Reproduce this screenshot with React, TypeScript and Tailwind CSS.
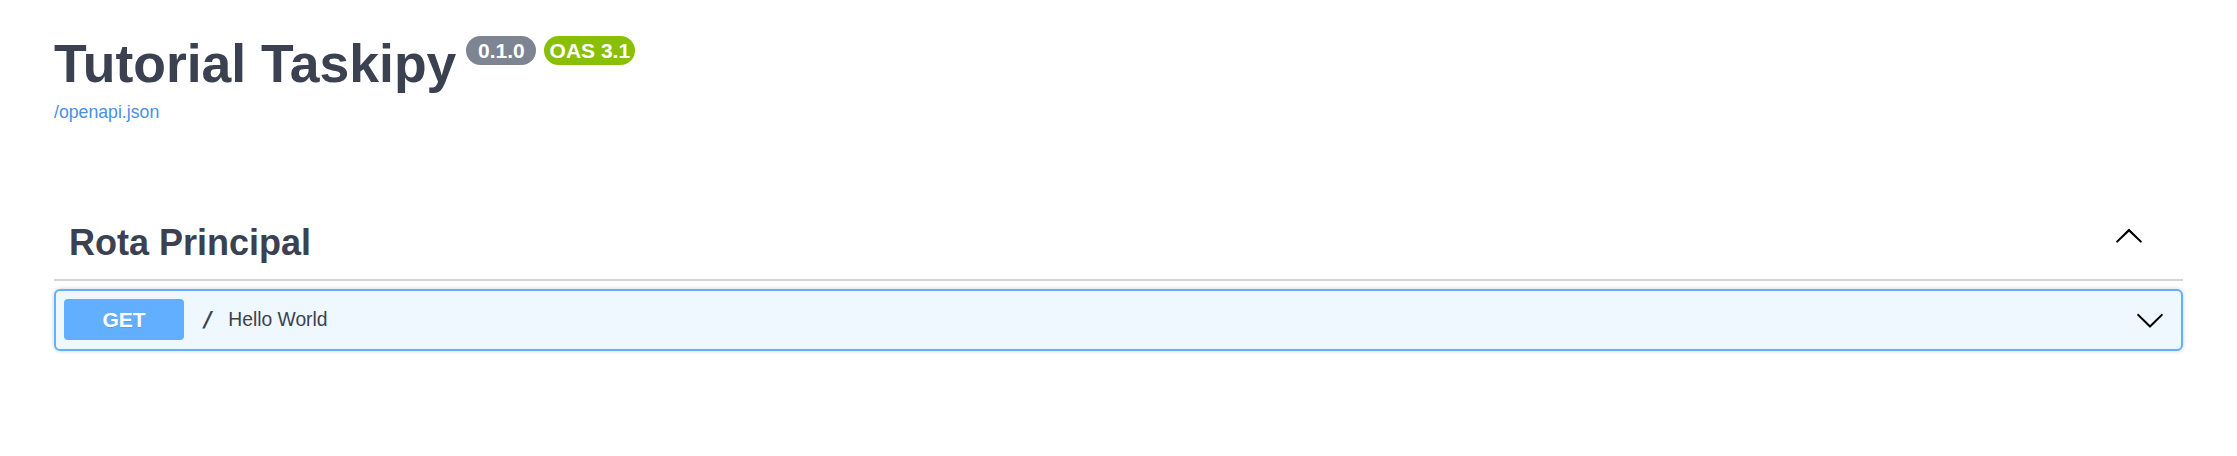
import React from 'react';

const sans = { fontFamily: '"Liberation Sans", Arial, Helvetica, sans-serif' };

function ArrowUp() {
  return (
    <svg width="30" height="30" viewBox="0 0 20 20" className="shrink-0">
      <path
        fill="#000"
        d="M17.418 14.908c.272.268.709.268.979 0s.271-.701 0-.969l-7.908-7.83c-.27-.268-.707-.268-.979 0l-7.908 7.83c-.27.268-.27.701 0 .969.271.268.709.268.979 0L10 7.767l7.418 7.141z"
      />
    </svg>
  );
}

function ArrowDown() {
  return (
    <svg width="30" height="30" viewBox="0 0 20 20" className="shrink-0">
      <path
        fill="#000"
        d="M17.418 6.109c.272-.268.709-.268.979 0s.271.701 0 .969l-7.908 7.83c-.27.268-.707.268-.979 0l-7.908-7.83c-.27-.268-.27-.701 0-.969.271-.268.709-.268.979 0L10 13.25l7.418-7.141z"
      />
    </svg>
  );
}

export default function App() {
  return (
    <div className="w-[2237px] h-[456px] bg-white px-[54px] text-[#3b4151]" style={sans}>
      {/* Info */}
      <div className="pt-[36px]">
        <div className="flex items-start">
          <h1 className="mt-[1px] text-[53.5px] leading-[53px] font-bold">Tutorial Taskipy</h1>
          <span className="ml-[10px] w-[70px] h-[29px] rounded-full bg-[#7d8492] text-white text-[21px] leading-[29px] font-bold text-center">
            0.1.0
          </span>
          <span className="ml-[8px] w-[91px] h-[29px] rounded-full bg-[#89bf04] text-white text-[21px] leading-[29px] font-bold text-center">
            OAS 3.1
          </span>
        </div>
        <a href="#" className="block mt-[12px] text-[17.7px] leading-[20px] text-[#4990e2] w-fit">
          /openapi.json
        </a>
      </div>

      {/* Tag section */}
      <div className="mt-[103px]">
        <div className="flex items-start justify-between pl-[15px] pr-[39px] pb-[18px] border-b-2 border-[#d3d4d8]">
          <h3 className="text-[36px] leading-[36px] font-bold">Rota Principal</h3>
          <div className="-mt-[5px]">
            <ArrowUp />
          </div>
        </div>

        <div className="mt-[8px] h-[62px] flex items-center pl-[8px] pr-[16px] pb-[2px] border-2 border-[#61affe] rounded-[6px] bg-[#eff7ff] shadow-[0_0_4px_rgba(0,0,0,0.19)]">
          <span className="w-[120px] h-[41px] rounded-[4px] bg-[#61affe] text-white text-[21px] leading-[41px] font-bold text-center [text-shadow:0_1px_0_rgba(0,0,0,0.1)]">
            GET
          </span>
          <span
            className="pl-[17px] pr-[14px] text-[22px] font-bold"
            style={{ fontFamily: '"DejaVu Sans Mono", "Liberation Mono", monospace' }}
          >
            /
          </span>
          <span className="mt-[2px] text-[19.3px]">Hello World</span>
          <div className="ml-auto mt-[1px]">
            <ArrowDown />
          </div>
        </div>
      </div>
    </div>
  );
}
